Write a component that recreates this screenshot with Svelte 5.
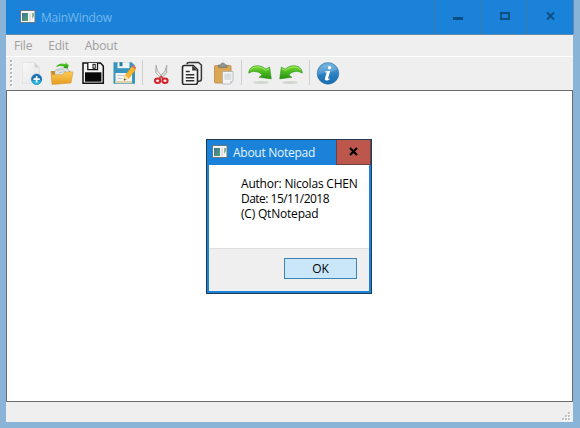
<script>
  const menus = ['File', 'Edit', 'About'];
  const groups = [
    ['new', 'open', 'save', 'saveas'],
    ['cut', 'copy', 'paste'],
    ['redo', 'undo'],
    ['info']
  ];
</script>

{#snippet appIcon()}
  <svg class="app-icon" width="16" height="14" viewBox="0 0 16 14">
    <defs>
      <linearGradient id="pane" x1="0" y1="0" x2="1" y2="1">
        <stop offset="0" stop-color="#3b739c" /><stop offset="1" stop-color="#55a26c" />
      </linearGradient>
    </defs>
    <rect x=".5" y=".5" width="14.5" height="12" fill="#f4f4f2" stroke="#657684" />
    <rect x="2" y="3" width="6" height="8" fill="url(#pane)" />
    <rect x="9" y="3" width="2" height="8" fill="#dedede" />
    <path d="M12 3h2v3l-2 3z" fill="#86b59b" />
  </svg>
{/snippet}

{#snippet arrow()}
  <ellipse cx="13" cy="21.5" rx="8" ry="1.4" fill="#bfc7bb" opacity=".65" />
  <path d="M.7 12.2C.8 7 5 4.3 10.5 4.7c3 .3 5.5 1.8 7.3 3.4l3.9-2 1.6 11.8-12.3-1.6 3.2-2.2C11.5 10.4 5.2 9.2.7 12.2z" fill="url(#green)" stroke="#258c16" stroke-width=".5" />
  <path d="M2.2 9.3C5.5 5 12 4.8 17.6 9.4l3.4-1.7" fill="none" stroke="#b2ef72" stroke-width="1" opacity=".75" />
{/snippet}

{#snippet icon(name)}
  <svg width="24" height="24" viewBox="0 0 24 24">
    <defs>
      <linearGradient id="green" x1="0" y1="0" x2="0" y2="1"><stop stop-color="#7edb37" /><stop offset=".55" stop-color="#43b51c" /><stop offset="1" stop-color="#26900f" /></linearGradient>
      <linearGradient id="folder" x1="0" y1="0" x2="0" y2="1"><stop stop-color="#ffce57" /><stop offset="1" stop-color="#e59b20" /></linearGradient>
      <linearGradient id="paper" x1="0" y1="0" x2="1" y2="1"><stop stop-color="#fafafa" /><stop offset="1" stop-color="#e3e3e3" /></linearGradient>
      <linearGradient id="blue" x1="0" y1="0" x2="0" y2="1"><stop stop-color="#73b4e0" /><stop offset=".5" stop-color="#2f83c3" /><stop offset="1" stop-color="#166ab0" /></linearGradient>
    </defs>
    {#if name === 'new'}
      <path d="M3.5 1.5h12l5 5v16h-17z" fill="url(#paper)" stroke="#dedede" stroke-width=".7" />
      <path d="M15.5 1.5v5h5z" fill="#d4d4d4" />
      <circle cx="17.6" cy="18.2" r="5.2" fill="#1670b4" stroke="#2875a7" stroke-width=".6" />
      <path d="M12.7 19.5a5 5 0 0 0 9.8 0z" fill="#25b4e0" />
      <path d="M17.6 15v6.4M14.4 18.2h6.4" stroke="#fff" stroke-width="1.7" />
    {:else if name === 'open'}
      <path d="M1 10h4l2-2h10l4 3v9l-19 2.5z" fill="#c88a27" />
      <path d="M5 9l8-2.5 6 2.5v6H5z" fill="#dfe5e7" stroke="#a6b0b2" stroke-width=".5" />
      <path d="M7 10l7-2M9 12l7-2" stroke="#a8b2b5" stroke-width=".7" />
      <path d="M1 10.5l1.5 3.2h10l2.5-2.7h8L21 22 2 23.5z" fill="url(#folder)" stroke="#d1922c" stroke-width=".5" />
      <path d="M6 6.2C8 2.7 12 1.9 15.5 3.2L15.5 1l3.2 3.2-1 3.3-4.2-.7.8-1.3C11.7 4.5 8.5 4.9 6 6.2z" fill="url(#green)" />
    {:else if name === 'save'}
      <path d="M2 2h17.5L22.3 5v17.3H2z" fill="#f4f4f4" stroke="#111" stroke-width="1.5" />
      <path d="M4 11.3h16.4v9.4H4z" fill="#080808" />
      <path d="M6.8 2v6.6h9.7V2" fill="#fff" stroke="#151515" stroke-width="1.3" />
      <rect x="12" y="3.3" width="2.2" height="4" fill="#fff" stroke="#111" />
    {:else if name === 'saveas'}
      <path d="M1.5 1.2h18L23 4.5v18.3H1.5z" fill="#3795bd" />
      <path d="M5.5 1.2h12v6h-12z" fill="#f0f5f6" /><path d="M7.5 1.2h3v4h-3z" fill="#287b9e" />
      <path d="M3.5 12h16.5v10H3.5z" fill="#f5f3ed" /><path d="M3.5 20H20v2.2H3.5z" fill="#e2d1a9" />
      <path d="M5.5 14.5h7M5.5 17.5h5" stroke="#c9ccca" />
      <path d="M12 19.3l1.2-5L20 5.5l3.7 3-7 8.9z" fill="#f6b72e" stroke="#d88921" stroke-width=".4" />
      <path d="M20 5.5l1.4-1.7 2.6 2.4V8z" fill="#e66d61" /><path d="M13.2 14.3l3.5 3.1-4.7 1.9z" fill="#fae2b2" /><path d="M12.4 17.5l1.5 1.2-2.1.9z" fill="#24313a" />
    {:else if name === 'cut'}
      <path d="M7 4.3l1.4 5.5 5.8 7-1.4 1.1L6.8 12z" fill="#ecece9" stroke="#989c96" stroke-width=".8" />
      <path d="M17.8 4.3l-1.8 5.5-5.8 7 1.4 1.1 6-5.9z" fill="#dcded9" stroke="#989c96" stroke-width=".8" />
      <g fill="none" stroke="#d72028" stroke-width="2"><ellipse cx="8.6" cy="19.8" rx="2.6" ry="2.2" /><ellipse cx="16" cy="19.8" rx="2.6" ry="2.2" /></g>
      <path d="M9.8 18l2.4-2.6 2.5 2.6" fill="none" stroke="#ce3038" stroke-width="1.3" />
    {:else if name === 'copy'}
      <path d="M7 3.2Q7 1.5 9 1.5h9.5l2.9 2.5v14q0 2.2-2.2 2.2h-2" fill="none" stroke="#383838" stroke-width="1.5" />
      <path d="M4.5 4.5h8.8l4.2 4v12.8q0 2.2-2.2 2.2H4.5q-2 0-2-2v-15q0-2 2-2z" fill="#f7f7f7" stroke="#292929" stroke-width="1.6" />
      <path d="M12.2 4.8v4.8h5z" fill="#333" /><path d="M5.8 10.5h4M5.8 13.7h8.5M5.8 16.8h8.5M5.8 19.8h8.5" stroke="#333" stroke-width="1.4" />
    {:else if name === 'paste'}
      <rect x="3.5" y="4.5" width="16.5" height="17.5" rx="1" fill="#dba755" stroke="#ba8544" stroke-width=".8" />
      <path d="M7.5 6.5V4h2.2c.2-2.7 4.2-2.7 4.4 0h1.9v2.5z" fill="#91958b" stroke="#6f756d" stroke-width=".7" />
      <path d="M11.5 10.5H22v9.5l-2.8 3h-7.7z" fill="#f3f4f5" stroke="#a5a8aa" stroke-width=".7" />
      <path d="M13.3 12.5h7v6.3h-7z" fill="#d8dde2" /><path d="M19.2 23v-3H22z" fill="#c2c6cb" />
    {:else if name === 'redo'}
      {@render arrow()}
    {:else if name === 'undo'}
      <g transform="matrix(-1 0 0 1 24 0)">{@render arrow()}</g>
    {:else}
      <circle cx="12" cy="12.4" r="10.8" fill="url(#blue)" stroke="#3174a8" stroke-width=".6" />
      <path d="M2 11C3 3.8 15 .8 21 7.8 17 12.8 8.5 10.8 2 14z" fill="#fff" opacity=".15" />
      <circle cx="13.6" cy="6.8" r="1.7" fill="#fff" /><path d="M9 10.5l5.3-.7-2.2 7.4c-.2.8.5.8 1.7 0v.8c-2.4 2.1-5.6 2.2-4.8-.7l1.5-5.3c.2-.7-.3-.7-1.5-.7z" fill="#fff" />
    {/if}
  </svg>
{/snippet}

<div class="desktop">
  <main class="window">
    <header class="titlebar">
      {@render appIcon()}
      <span class="title">MainWindow</span>
      <div class="controls">
        <button aria-label="Minimize"><svg width="10" height="10"><path d="M0 6h10v3H0z" fill="#0e4f83" /></svg></button>
        <button aria-label="Maximize"><svg width="10" height="10"><path d="M1 2h8v6H1z" fill="none" stroke="#0e4f83" stroke-width="2" /></svg></button>
        <button aria-label="Close"><svg width="10" height="10"><path d="M1 1.5l7 7M8 1.5l-7 7" fill="none" stroke="#0e4f83" stroke-width="2" /></svg></button>
      </div>
    </header>
    <nav>{#each menus as item}<span>{item}</span>{/each}</nav>
    <div class="toolbar">
      <svg class="grip" width="3" height="27">
        {#each [0, 4, 8, 12, 16, 20, 24] as y}<rect x="1" y={y + 1} width="2" height="2" fill="#fff" /><rect x="0" {y} width="2" height="2" fill="#b6b6b6" />{/each}
      </svg>
      {#each groups as group, i}
        {#if i > 0}<i class="separator"></i>{/if}
        <div class="group">{#each group as name}<button aria-label={name}>{@render icon(name)}</button>{/each}</div>
      {/each}
    </div>
    <div class="editor"></div>
    <footer class="status">
      <svg width="9" height="9">
        {#each [[6, 0], [3, 3], [6, 3], [0, 6], [3, 6], [6, 6]] as [x, y]}<rect x={x + 1} y={y + 1} width="2" height="2" fill="#fff" /><rect {x} {y} width="2" height="2" fill="#c2c2c2" />{/each}
      </svg>
    </footer>
  </main>

  <section class="dialog" role="dialog" aria-label="About Notepad">
    <header>
      {@render appIcon()}
      <span class="dialog-title">About Notepad</span>
      <button class="close" aria-label="Close"><svg width="9" height="9"><path d="M1 1l7 7M8 1L1 8" stroke="#000" stroke-width="2.2" /></svg></button>
    </header>
    <div class="message">
      <div class="author">Author: Nicolas CHEN</div><div class="date">Date: 15/11/2018</div><div class="product">(C) QtNotepad</div>
    </div>
    <footer><button class="ok">OK</button></footer>
  </section>
</div>

<style>
  .desktop, .desktop * { box-sizing: border-box; }
  .desktop { position: relative; width: 580px; height: 428px; padding: 0 7px 6px 6px; background: #8ab3d8; overflow: hidden; font: 12px/15px "Open Sans", "Noto Sans", sans-serif; }
  button { padding: 0; margin: 0; border: 0; background: none; font: inherit; }
  svg { display: block; flex: none; }
  .window { height: 422px; display: flex; flex-direction: column; background: #efefef; }
  .titlebar { height: 35px; flex: none; display: flex; align-items: center; padding-left: 14px; background: #1a83d9; border-bottom: 1px solid #6289a9; }
  .titlebar .app-icon { margin-top: -1px; }
  .title { margin-left: 5px; color: #74b7eb; letter-spacing: -.25px; }
  .controls { display: flex; margin-left: auto; height: 34px; margin-right: -1px; border-right: 1px solid #6289a9; }
  .controls button { width: 46px; display: flex; align-items: center; justify-content: center; border-left: 1px solid #3f7aa8; padding-bottom: 2px; }
  .controls button:first-child { width: 47px; }
  nav { height: 22px; flex: none; display: flex; align-items: center; gap: 16px; padding-left: 8px; color: #a0a0a0; border-bottom: 1px solid #fff; letter-spacing: -.2px; }
  .toolbar { height: 33px; flex: none; display: flex; align-items: center; padding: 0 0 2px 4px; }
  .grip { margin: 1px 6px 0 0; }
  .group { display: flex; gap: 7px; }
  .separator { width: 1px; height: 25px; margin: 0 6px; background: #d0d0d0; }
  .editor { height: 312px; flex: none; background: #fff; border: 1px solid #6b6b6b; }
  .status { height: 20px; display: flex; align-items: flex-end; justify-content: flex-end; padding: 0 2px 1px; }
  .dialog { position: absolute; left: 206px; top: 139px; width: 166px; height: 155px; display: flex; flex-direction: column; border: 1px solid #1e3c54; padding: 0 2px 2px; background: #1a83d9; }
  .dialog header { height: 25px; flex: none; display: flex; align-items: center; padding-left: 3px; color: #e7f3fd; }
  .dialog .app-icon { margin-top: -1px; }
  .dialog-title { margin: -1px 0 0 5px; white-space: nowrap; letter-spacing: -.27px; }
  .close { width: 35px; height: 25px; margin: 0 -2px 0 auto; padding-bottom: 1px; display: flex; align-items: center; justify-content: center; background: #bd574e; border: 1px solid #6c4247; border-top: 0; }
  .message { height: 83px; flex: none; padding: 11px 0 0 32px; background: #fff; color: #000; white-space: nowrap; }
  .author { letter-spacing: -.2px; }
  .date { letter-spacing: -.52px; }
  .product { letter-spacing: -.2px; }
  .dialog footer { height: 43px; flex: none; display: flex; justify-content: flex-end; padding: 9px 12px 0 0; background: #efefef; border-top: 1px solid #dfdfdf; }
  .ok { width: 73px; height: 21px; border: 1px solid #3d84b5; background: #c9e7f9; color: #000; }
</style>
